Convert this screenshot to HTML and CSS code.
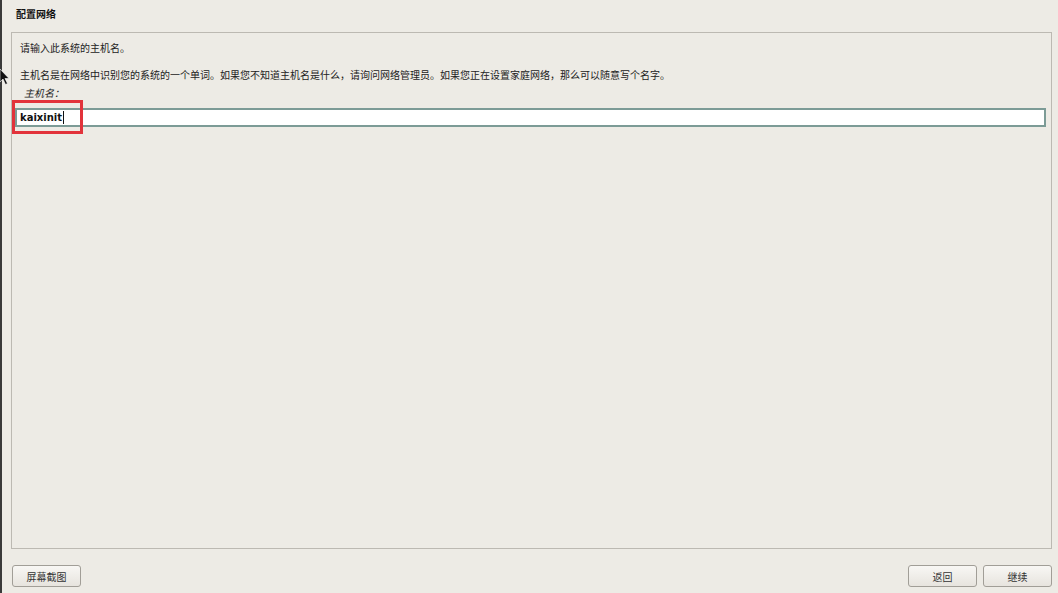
FILE: index.html
```html
<!DOCTYPE html>
<html lang="zh-CN">
<head>
<meta charset="utf-8">
<title>配置网络</title>
<link rel="stylesheet" href="styles.css">
</head>
<body>
<div class="page">
  <div class="edge"></div>
  <header class="header">配置网络</header>
  <main class="panel">
    <p class="line first">请输入此系统的主机名。</p>
    <p class="line second">主机名是在网络中识别您的系统的一个单词。如果您不知道主机名是什么，请询问网络管理员。如果您正在设置家庭网络，那么可以随意写个名字。</p>
    <p class="label">主机名：</p>
    <div class="field-wrap">
      <div class="field"><span class="value">kaixinit</span><span class="caret"></span></div>
      <div class="highlight"></div>
    </div>
  </main>
  <footer class="footer">
    <button class="btn">屏幕截图</button>
    <div class="right">
      <button class="btn">返回</button>
      <button class="btn">继续</button>
    </div>
  </footer>
  <svg class="cursor" width="10" height="17" viewBox="0 0 10 17"><path d="M0 0 L0 13 L3 10 L5.5 15.5 L7.5 14.5 L5 9.5 L9 9.5 Z" fill="#111" stroke="#fff" stroke-width="0.6"/></svg>
</div>
</body>
</html>
```
FILE: styles.css
```css
* { box-sizing: border-box; }
html, body { margin: 0; padding: 0; }
body {
  background: #edebe5;
  font-family: "Noto Sans CJK SC", "Noto Sans", sans-serif;
  font-size: 10px;
  color: #222;
}
.page {
  position: relative;
  width: 1058px;
  height: 593px;
  display: flex;
  flex-direction: column;
  overflow: hidden;
}
.edge {
  position: absolute;
  left: 0; top: 0; bottom: 0;
  width: 2px;
  background: #3a3a3a;
}
.header {
  height: 32px;
  padding: 8px 0 0 16px;
  line-height: 12px;
  font-weight: bold;
  font-size: 10px;
  color: #111;
}
.panel {
  flex: 1;
  margin: 0 6px 0 11px;
  border: 1px solid #bcb9b2;
  padding: 8px 5px 0 3px;
}
.line {
  margin: 0;
  padding-left: 5px;
  line-height: 14px;
  white-space: nowrap;
}
.second { margin-top: 13px; }
.label {
  margin: 4px 0 0;
  padding-left: 9px;
  line-height: 14px;
  font-style: italic;
}
.field-wrap {
  position: relative;
  margin-top: 8px;
}
.field {
  height: 19px;
  border: 2px solid #7c9b96;
  background: #fff;
  padding-left: 3px;
  display: flex;
  align-items: center;
}
.value {
  font-family: "DejaVu Sans", sans-serif;
  font-weight: bold;
  font-size: 10px;
  color: #111;
}
.caret {
  width: 1px;
  height: 13px;
  background: #111;
  margin-left: 1px;
}
.highlight {
  position: absolute;
  left: -3px;
  top: -8px;
  width: 71px;
  height: 34px;
  border: 3px solid #e2333b;
}
.footer {
  height: 44px;
  padding: 16px 6px 0 12px;
  display: flex;
  justify-content: space-between;
  align-items: flex-start;
}
.right { display: flex; gap: 6px; }
.btn {
  width: 69px;
  height: 22px;
  border: 1px solid #a19e97;
  border-radius: 3px;
  background: linear-gradient(#f8f7f4, #e7e4de);
  font-family: "Noto Sans CJK SC", sans-serif;
  font-size: 10px;
  color: #333;
  padding: 0;
}
.cursor {
  position: absolute;
  left: 0;
  top: 69px;
}
```
